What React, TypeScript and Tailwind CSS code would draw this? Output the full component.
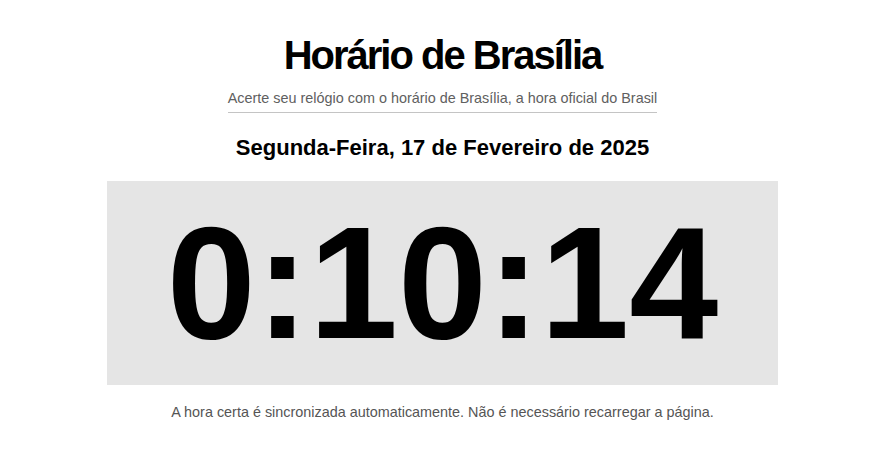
const App = () => {
    return (
        <main className="flex min-h-screen flex-col items-center bg-white font-['Liberation_Sans',Arial,sans-serif]">
            <h1 className="mt-[31px] text-[40px] font-bold leading-[48px] tracking-[-2px] text-black">Horário de Brasília</h1>
            <p className="mt-[11px] border-b border-[#c4c4c4] pb-[6px] text-[14.4px] leading-[16px] text-[#606060]">
                Acerte seu relógio com o horário de Brasília, a hora oficial do Brasil
            </p>
            <h2 className="mt-[22px] text-[22px] font-bold leading-[26px] text-black">Segunda-Feira, 17 de Fevereiro de 2025</h2>
            <div className="mt-[20px] flex h-[204px] w-[671px] items-center justify-center bg-[#e5e5e5]">
                <span className="text-[160px] font-bold leading-none text-black">0:10:14</span>
            </div>
            <p className="mt-[19px] text-[14.4px] leading-[16px] text-[#555]">
                A hora certa é sincronizada automaticamente. Não é necessário recarregar a página.
            </p>
        </main>
    )
}

export default App;
